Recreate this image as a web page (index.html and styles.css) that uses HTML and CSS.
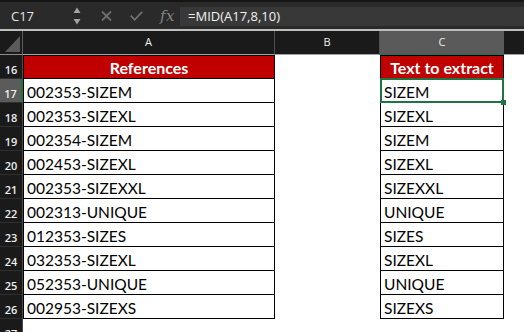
FILE: index.html
```html
<!doctype html>
<html>
<head>
	<meta charset="utf-8" />
	<title>MID extract</title>
	<link rel="stylesheet" href="styles.css">
</head>
<body>
	<div class="toolbar">
		<div class="namebox">C17</div>
		<div class="spin">
			<svg width="8" height="18" viewBox="0 0 8 18"><path d="M0.5 6 L4 0.5 L7.5 6 Z M0.5 12 L4 17.5 L7.5 12 Z" fill="#a3a3a3"/></svg>
		</div>
		<div class="fbtns">
			<svg class="btn-x" width="11" height="10" viewBox="0 0 11 10"><path d="M1 0.5 L10 9.5 M10 0.5 L1 9.5" stroke="#6f6f6f" stroke-width="1.8" fill="none"/></svg>
			<svg class="btn-ok" width="13" height="10" viewBox="0 0 13 10"><path d="M0.8 4.6 L4.6 8.8 L12.2 0.8" stroke="#6f6f6f" stroke-width="1.8" fill="none"/></svg>
			<span class="fx">fx</span>
		</div>
		<div class="formula">=MID(A17,8,10)</div>
	</div>

	<div class="sheet">
		<div class="corner"><svg width="16" height="17" viewBox="0 0 16 17"><path d="M0 16 L15 0 L15 16 Z" fill="#5b5b5b"/></svg></div>
		<div class="colhead">A</div>
		<div class="colhead">B</div>
		<div class="colhead colhead-sel">C</div>
		<div class="colhead colhead-last"></div>

		<div class="rowhead">16</div>
		<div class="cell col-a head">References</div>
		<div></div>
		<div class="cell col-c head">Text to extract</div>
		<div></div>

		<div class="rowhead rowhead-sel">17</div>
		<div class="cell col-a">002353-SIZEM</div>
		<div></div>
		<div class="cell col-c selected">SIZEM</div>
		<div></div>

		<div class="rowhead">18</div>
		<div class="cell col-a">002353-SIZEXL</div>
		<div></div>
		<div class="cell col-c">SIZEXL</div>
		<div></div>

		<div class="rowhead">19</div>
		<div class="cell col-a">002354-SIZEM</div>
		<div></div>
		<div class="cell col-c">SIZEM</div>
		<div></div>

		<div class="rowhead">20</div>
		<div class="cell col-a">002453-SIZEXL</div>
		<div></div>
		<div class="cell col-c">SIZEXL</div>
		<div></div>

		<div class="rowhead">21</div>
		<div class="cell col-a">002353-SIZEXXL</div>
		<div></div>
		<div class="cell col-c">SIZEXXL</div>
		<div></div>

		<div class="rowhead">22</div>
		<div class="cell col-a">002313-UNIQUE</div>
		<div></div>
		<div class="cell col-c">UNIQUE</div>
		<div></div>

		<div class="rowhead">23</div>
		<div class="cell col-a">012353-SIZES</div>
		<div></div>
		<div class="cell col-c">SIZES</div>
		<div></div>

		<div class="rowhead">24</div>
		<div class="cell col-a">032353-SIZEXL</div>
		<div></div>
		<div class="cell col-c">SIZEXL</div>
		<div></div>

		<div class="rowhead">25</div>
		<div class="cell col-a">052353-UNIQUE</div>
		<div></div>
		<div class="cell col-c">UNIQUE</div>
		<div></div>

		<div class="rowhead">26</div>
		<div class="cell col-a">002953-SIZEXS</div>
		<div></div>
		<div class="cell col-c">SIZEXS</div>
		<div></div>

		<div class="rowhead">27</div>
		<div></div>
		<div></div>
		<div></div>
		<div></div>
	</div>
</body>
</html>
```

FILE: styles.css
```css
html, body { margin: 0; padding: 0; background: #fff; }
body { width: 524px; height: 332px; overflow: hidden; font-family: "Open Sans", sans-serif; }

/* formula bar */
.toolbar {
	height: 27px;
	border-top: 2px solid #151515;
	border-bottom: 2px solid #bdbdbd;
	background: #2a2a2a;
	display: flex;
	align-items: center;
}
.namebox { width: 62px; padding-left: 11px; font-size: 13px; color: #e6e6e6; line-height: 16px; }
.spin { width: 8px; height: 18px; display: flex; }
.fbtns { display: flex; align-items: center; width: 99px; padding-left: 20px; box-sizing: border-box; }
.btn-x { margin-right: 18px; }
.btn-ok { margin-right: 17px; }
.fx { font-family: "DejaVu Serif", serif; font-style: italic; font-size: 15px; color: #858585; letter-spacing: 0.5px; }
.formula {
	flex: 1;
	align-self: flex-start;
	margin-top: 5px;
	height: 19px;
	background: #383838;
	color: #f2f2f2;
	font-size: 13px;
	line-height: 19px;
	padding-left: 8px;
}

/* grid */
.sheet {
	display: grid;
	grid-template-columns: 23px 252px 105px 124px 1fr;
	grid-auto-rows: 24px;
}
.corner {
	background: #1a1a1a;
	border-right: 1px solid #5e5e5e;
	border-bottom: 1px solid #8c8c8c;
	display: flex;
	align-items: flex-end;
	justify-content: flex-end;
	padding: 0 1px 1px 0;
}
.colhead {
	height: 23px;
	background: #1a1a1a;
	border-bottom: 1px solid #a2a2a2;
	border-right: 1px solid #4f4f4f;
	color: #f0f0f0;
	font-size: 11px;
	line-height: 22px;
	text-align: center;
}
.colhead-sel { background: #5a5a5a; border-bottom: 2px solid #217346; line-height: 21px; border-right: 0; }
.colhead-last { border-right: 0; }

.rowhead {
	background: #1a1a1a;
	border-right: 1px solid #4a4a4a;
	border-bottom: 1px solid #2f2f2f;
	color: #eeeeee;
	font-size: 11px;
	font-weight: 600;
	line-height: 12px;
	display: flex;
	align-items: flex-end;
	justify-content: center;
	padding-bottom: 2px;
}
.rowhead-sel { background: #5b5b5b; border-right: 2px solid #217346; }

.cell {
	font-family: Lato, "Open Sans", sans-serif;
	font-size: 15.5px;
	line-height: 16px;
	color: #000;
	border-bottom: 1px solid #000;
	border-left: 1px solid #000;
	border-right: 1px solid #000;
	display: flex;
	align-items: flex-end;
	padding: 0 0 2px 3px;
	white-space: nowrap;
}
.head {
	background: #c00000;
	border-top: 1px solid #000;
	color: #fff;
	font-size: 16px;
	font-weight: bold;
	justify-content: center;
	padding-left: 0;
}
.selected { position: relative; }
.selected::after {
	content: "";
	position: absolute;
	left: -1px; right: -1px; top: -1px; bottom: -1px;
	border: 2px solid #217346;
}
.selected::before {
	content: "";
	position: absolute;
	right: -3px; bottom: -3px;
	width: 5px; height: 5px;
	background: #217346;
	z-index: 1;
}
```
